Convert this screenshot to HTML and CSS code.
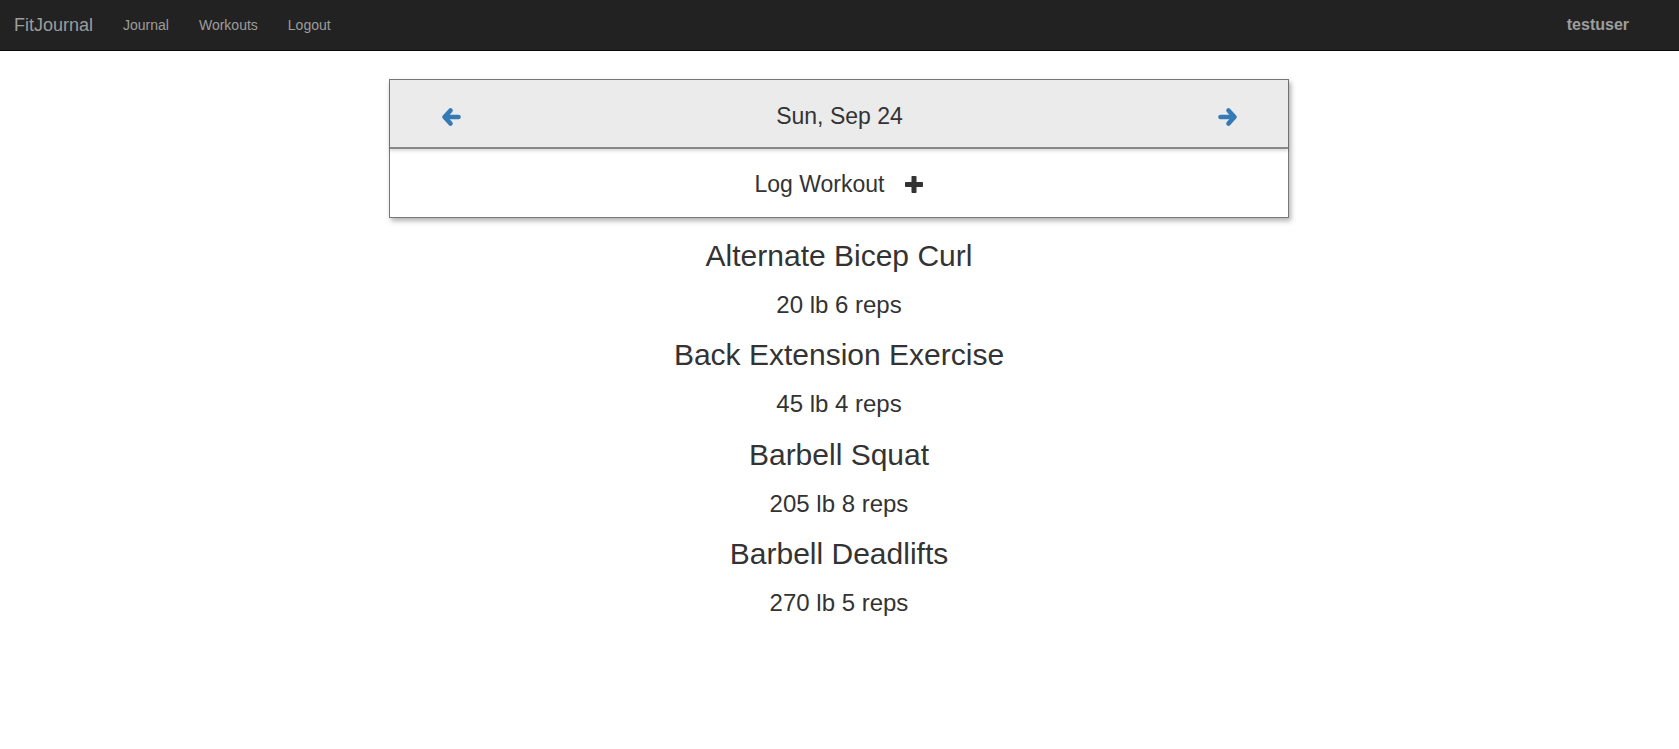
FILE: index.html
```html
<!DOCTYPE html>
<html>
<head>
<meta charset="utf-8">
<title>FitJournal</title>
<link rel="stylesheet" href="styles.css">
</head>
<body>
<nav class="navbar">
  <div class="nav-left">
    <a class="brand" href="#">FitJournal</a>
    <a class="nav-link" href="#">Journal</a>
    <a class="nav-link" href="#">Workouts</a>
    <a class="nav-link" href="#">Logout</a>
  </div>
  <div class="nav-user">testuser</div>
</nav>
<main class="main">
  <section class="day-card">
    <div class="day-header">
      <a class="arrow" href="#" aria-label="Previous day">
        <svg width="20" height="20" viewBox="0 0 20 20"><path d="M9.5 3.5 L3.5 10 L9.5 16.5 M4 10 H17.5" fill="none" stroke="#337ab7" stroke-width="4.6" stroke-linecap="round" stroke-linejoin="round"/></svg>
      </a>
      <span class="day-title">Sun, Sep 24</span>
      <a class="arrow" href="#" aria-label="Next day">
        <svg width="20" height="20" viewBox="0 0 20 20"><path d="M10.5 3.5 L16.5 10 L10.5 16.5 M16 10 H2.5" fill="none" stroke="#337ab7" stroke-width="4.6" stroke-linecap="round" stroke-linejoin="round"/></svg>
      </a>
    </div>
    <div class="log-row">
      <span>Log Workout</span>
      <svg class="plus" width="18" height="17" viewBox="0 0 18 17"><rect x="6.5" y="0" width="5" height="17" rx="0.8" fill="#333"/><rect x="0" y="6" width="18" height="5" rx="0.8" fill="#333"/></svg>
    </div>
  </section>
  <div class="entries">
    <h2 class="ex-name">Alternate Bicep Curl</h2>
    <h3 class="ex-set">20 lb 6 reps</h3>
    <h2 class="ex-name">Back Extension Exercise</h2>
    <h3 class="ex-set">45 lb 4 reps</h3>
    <h2 class="ex-name">Barbell Squat</h2>
    <h3 class="ex-set">205 lb 8 reps</h3>
    <h2 class="ex-name">Barbell Deadlifts</h2>
    <h3 class="ex-set">270 lb 5 reps</h3>
  </div>
</main>
</body>
</html>
```
FILE: styles.css
```css
html, body {
  margin: 0;
  padding: 0;
  background: #fff;
}
body {
  font-family: "Liberation Sans", Arial, Helvetica, sans-serif;
  font-size: 14px;
  line-height: 1.42857;
  color: #333;
}
a { text-decoration: none; }

.navbar {
  height: 50px;
  background: #222;
  border-bottom: 1px solid #080808;
  display: flex;
  justify-content: space-between;
  align-items: flex-start;
  padding: 0 50px 0 0;
}
.nav-left {
  display: flex;
}
.brand {
  display: block;
  padding: 15px 15px 15px 14px;
  font-size: 18px;
  line-height: 20px;
  color: #9d9d9d;
}
.nav-link {
  display: block;
  padding: 15px 15px;
  font-size: 14px;
  line-height: 20px;
  color: #9d9d9d;
}
.nav-user {
  padding: 15px 0;
  font-size: 16px;
  line-height: 20px;
  font-weight: bold;
  color: #9d9d9d;
}

.main {
  padding: 28px 0 0 389px;
  width: 900px;
}
.day-card {
  width: 898px;
  border: 1px solid #777;
  box-shadow: 2px 3px 5px rgba(0, 0, 0, 0.3);
  background: #fff;
}
.day-header {
  background: #ebebeb;
  border-bottom: 2px solid #888;
  box-shadow: 0 2px 3px rgba(0, 0, 0, 0.15);
  display: flex;
  justify-content: space-between;
  align-items: center;
  padding: 23px 50px 17px 51px;
  height: 27px;
  position: relative;
}
.arrow {
  display: flex;
  width: 20px;
  height: 20px;
  margin-top: 1px;
}
.day-title {
  font-size: 23px;
  line-height: 27px;
  color: #333;
}
.log-row {
  display: flex;
  justify-content: center;
  align-items: center;
  gap: 21px;
  padding: 22px 0 19px;
  height: 27px;
  font-size: 23px;
  line-height: 27px;
  color: #333;
}
.plus {
  margin-top: -1px;
}

.entries {
  text-align: center;
  padding-top: 21px;
}
.ex-name {
  font-size: 30px;
  font-weight: 500;
  line-height: 1.1;
  margin: 0 0 20px;
  color: #333;
}
.ex-set {
  font-size: 24px;
  font-weight: 500;
  line-height: 1.1;
  margin: 0 0 20px;
  color: #333;
}
```
